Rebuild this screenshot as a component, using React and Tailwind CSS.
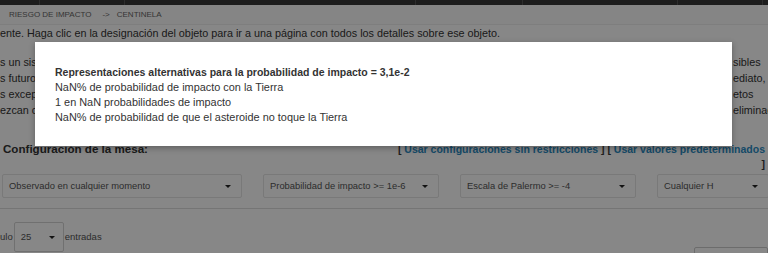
const font = { fontFamily: '"Liberation Sans", Arial, Helvetica, sans-serif' };

const introLines = [
  { left: 's un sistema de monitoreo de colisiones altamente automatizado que escanea continuamente el catálogo más actual de asteroides para detectar po', right: 'sibles' },
  { left: 's futuros con la Tierra durante los próximos 100 años. Siempre que se detecte un impacto potencial, se analizará y los resultados se publicarán de inm', right: 'ediato, c' },
  { left: 's excepcionales, que a menudo se observan durante un breve período de tiempo, pueden asociarse a impactos potenciales con obj', right: 'etos' },
  { left: 'ezcan cuando se dispone de observaciones adicionales que permiten una mejor caracterización de la órbita y la consecuente e', right: 'eliminac' },
];

const filters = [
  { label: 'Observado en cualquier momento', w: 'w-[240px]' },
  { label: 'Probabilidad de impacto >= 1e-6', w: 'w-[176px]' },
  { label: 'Escala de Palermo >= -4', w: 'w-[176px]' },
  { label: 'Cualquier H', w: 'w-[112px]' },
];

function Caret() {
  return <span className="inline-block shrink-0 w-0 h-0 border-l-[3px] border-r-[3px] border-t-[3px] border-l-transparent border-r-transparent border-t-[#222]" />;
}

export default function App() {
  return (
    <div className="relative w-[768px] h-[253px] overflow-hidden bg-white text-[#333]" style={font}>
      {/* top nav */}
      <div className="flex h-[5px] bg-[#383838]">
        <div className="w-[40px] border-r border-[#555]" />
        <div className="w-[85px] border-r border-[#555]" />
        <div className="w-[291px] border-r border-[#555]" />
        <div className="w-[107px] border-r border-[#555]" />
        <div className="w-[155px] border-r border-[#555]" />
        <div className="w-[85px] border-r border-[#555]" />
      </div>

      {/* breadcrumb */}
      <div className="h-[20px] flex items-center pl-[9px] text-[8px] uppercase text-[#666] bg-[#fbfbfb] border-b border-[#eee]">
        <span>Riesgo de impacto</span>
        <span className="ml-[11px]">-&gt;</span>
        <span className="ml-[7px]">Centinela</span>
      </div>

      {/* intro text */}
      <div className="text-[10.8px] leading-[16px] text-[#333] whitespace-nowrap">
        <div className="h-[16px]">ente. Haga clic en la designación del objeto para ir a una página con todos los detalles sobre ese objeto.</div>
        <div className="h-[13px]" />
        {introLines.map((l, i) => (
          <div key={i} className="flex">
            <span className="w-[733px] shrink-0 overflow-hidden">{l.left}</span>
            <span>{l.right}</span>
          </div>
        ))}
      </div>

      {/* table config */}
      <div className="flex justify-between items-start mt-[22px] pl-[3px] pr-[3px]">
        <div className="text-[11.6px] font-bold text-[#333] leading-[18px]">Configuración de la mesa:</div>
        <div className="pt-[2px] text-right text-[10.5px] leading-[15px] font-bold text-[#3a3a3a] whitespace-nowrap">
          <div>
            [ <span className="text-[#2b8cc4]">Usar configuraciones sin restricciones</span> ] [{' '}
            <span className="text-[#2b8cc4]">Usar valores predeterminados</span>
          </div>
          <div>]</div>
        </div>
      </div>

      <div className="flex gap-[21px] pl-[2px] mt-[2px] pb-[10px] border-b border-[#ddd]">
        {filters.map((f) => (
          <div
            key={f.label}
            className={`${f.w} shrink-0 h-[24px] flex items-center justify-between pl-[6px] pr-[10px] border border-[#e4e4e4] rounded-[2px] bg-white text-[9.4px] text-[#555] whitespace-nowrap`}
          >
            <span>{f.label}</span>
            <Caret />
          </div>
        ))}
      </div>

      {/* entries */}
      <div className="flex items-start justify-between mt-[13px]">
        <div className="flex items-center text-[9.5px] text-[#555]">
          <span>ulo</span>
          <div className="ml-[1px] w-[50px] h-[30px] flex items-center justify-between pl-[6px] pr-[8px] border border-[#d4d4d4] rounded-[2px]">
            <span>25</span>
            <Caret />
          </div>
          <span className="ml-[1px]">entradas</span>
        </div>
        <div className="mt-[25px] w-[74px] h-[20px] border border-[#ccc] rounded-[2px]" />
      </div>

      {/* modal backdrop */}
      <div className="absolute inset-0 bg-black/[0.47]" />

      {/* modal */}
      <div className="absolute left-[35px] top-[42px] w-[697px] h-[104px] bg-white shadow-[0_2px_6px_rgba(0,0,0,0.3)] px-[20px] pt-[23px] text-[10.9px] leading-[15px] text-[#333]">
        <p className="font-bold text-[10.5px]">Representaciones alternativas para la probabilidad de impacto = 3,1e-2</p>
        <p>NaN% de probabilidad de impacto con la Tierra</p>
        <p>1 en NaN probabilidades de impacto</p>
        <p>NaN% de probabilidad de que el asteroide no toque la Tierra</p>
      </div>
    </div>
  );
}
